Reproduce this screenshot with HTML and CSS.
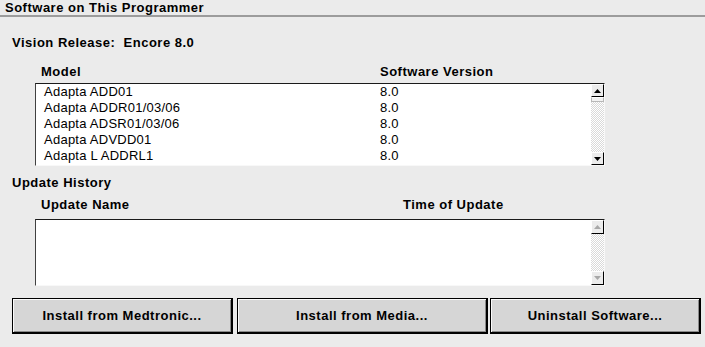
FILE: index.html
```html
<!DOCTYPE html>
<html>
<head>
<meta charset="utf-8">
<link rel="stylesheet" href="styles.css">
</head>
<body>
<div class="header">Software on This Programmer</div>
<div class="release">Vision Release:&nbsp; Encore 8.0</div>
<div class="cols cols-model"><span>Model</span><span>Software Version</span></div>
<div class="listbox models">
  <div class="rows">
    <div class="row"><span>Adapta ADD01</span><span>8.0</span></div>
    <div class="row"><span>Adapta ADDR01/03/06</span><span>8.0</span></div>
    <div class="row"><span>Adapta ADSR01/03/06</span><span>8.0</span></div>
    <div class="row"><span>Adapta ADVDD01</span><span>8.0</span></div>
    <div class="row"><span>Adapta L ADDRL1</span><span>8.0</span></div>
  </div>
  <div class="vscroll">
    <div class="sbtn"><svg width="11" height="10" viewBox="0 0 11 10"><polygon points="2,7 9,7 5.5,3" fill="#000"/></svg></div>
    <div class="thumb"></div>
    <div class="track"></div>
    <div class="sbtn"><svg width="11" height="10" viewBox="0 0 11 10"><polygon points="2,3 9,3 5.5,7" fill="#000"/></svg></div>
  </div>
</div>
<div class="section">Update History</div>
<div class="cols cols-history"><span>Update Name</span><span>Time of Update</span></div>
<div class="listbox history">
  <div class="rows"></div>
  <div class="vscroll">
    <div class="sbtn disabled"><svg width="11" height="12" viewBox="0 0 11 12"><polygon points="2,8 9,8 5.5,4" fill="#a8a8a8"/></svg></div>
    <div class="track"></div>
    <div class="sbtn disabled"><svg width="11" height="12" viewBox="0 0 11 12"><polygon points="2,4 9,4 5.5,8" fill="#a8a8a8"/></svg></div>
  </div>
</div>
<div class="buttons">
  <button class="btn btn-medtronic">Install from Medtronic...</button>
  <button class="btn btn-media">Install from Media...</button>
  <button class="btn btn-uninstall">Uninstall Software...</button>
</div>
</body>
</html>
```
FILE: styles.css
```css
html, body {
  margin: 0;
  padding: 0;
  background: #ebebeb;
  color: #000;
  font-family: "Liberation Sans", Arial, sans-serif;
  font-size: 13px;
  line-height: 15px;
}
.header, .release, .cols, .section, .btn {
  font-weight: bold;
  letter-spacing: 0.5px;
}
.header {
  height: 15px;
  padding-left: 5px;
  border-bottom: 2px solid #9c9c9c;
}
.release {
  margin-top: 18px;
  padding-left: 12px;
}
.cols {
  display: grid;
  margin-top: 14px;
  padding-left: 41px;
}
.cols-model { grid-template-columns: 339px auto; }
.cols-history { grid-template-columns: 362px auto; margin-top: 7px; }
.listbox {
  display: flex;
  margin-left: 35px;
  width: 568px;
  background: #fff;
  border-top: 1px solid #1a1a1a;
  border-left: 1px solid #404040;
  border-right: 1px solid #f8f8f8;
  border-bottom: 1px solid #f8f8f8;
}
.models { margin-top: 4px; height: 81px; }
.history { margin-top: 7px; height: 65px; }
.rows {
  flex: 1;
  padding-left: 8px;
  overflow: hidden;
  letter-spacing: 0.25px;
}
.row {
  display: grid;
  grid-template-columns: 336px auto;
  height: 16px;
  line-height: 16px;
}
.vscroll {
  width: 13px;
  display: flex;
  flex-direction: column;
}
.sbtn {
  height: 13px;
  background: #ececec;
  box-sizing: border-box;
  border-top: 1px solid #fff;
  border-left: 1px solid #fff;
  border-right: 1px solid #000;
  border-bottom: 1px solid #000;
  display: flex;
  align-items: center;
  justify-content: center;
}
.history .sbtn { height: 14px; }
.sbtn svg { display: block; }
.thumb {
  height: 5px;
  background: #f2f2f2;
  box-sizing: border-box;
  border: 1px solid #b8b8b8;
  border-top-color: #fff;
}
.track {
  flex: 1;
  background: repeating-conic-gradient(#ffffff 0 25%, #d9d9d9 0 50%) 0 0 / 2px 2px;
}
.section {
  margin-top: 9px;
  padding-left: 12px;
}
.buttons {
  display: flex;
  margin-top: 12px;
  padding-left: 12px;
}
.btn {
  height: 36px;
  padding: 0;
  margin: 0;
  background: #d6d6d6;
  border: 1px solid #000;
  border-right-width: 2px;
  border-bottom-width: 2px;
  box-shadow: inset 1px 1px #fafafa, inset -1px -1px #8a8a8a;
  font-family: "Liberation Sans", Arial, sans-serif;
  font-size: 13px;
  color: #000;
  text-align: center;
}
.btn-medtronic { width: 221px; }
.btn-media { width: 251px; margin-left: 4px; }
.btn-uninstall { width: 211px; margin-left: 2px; }
```
